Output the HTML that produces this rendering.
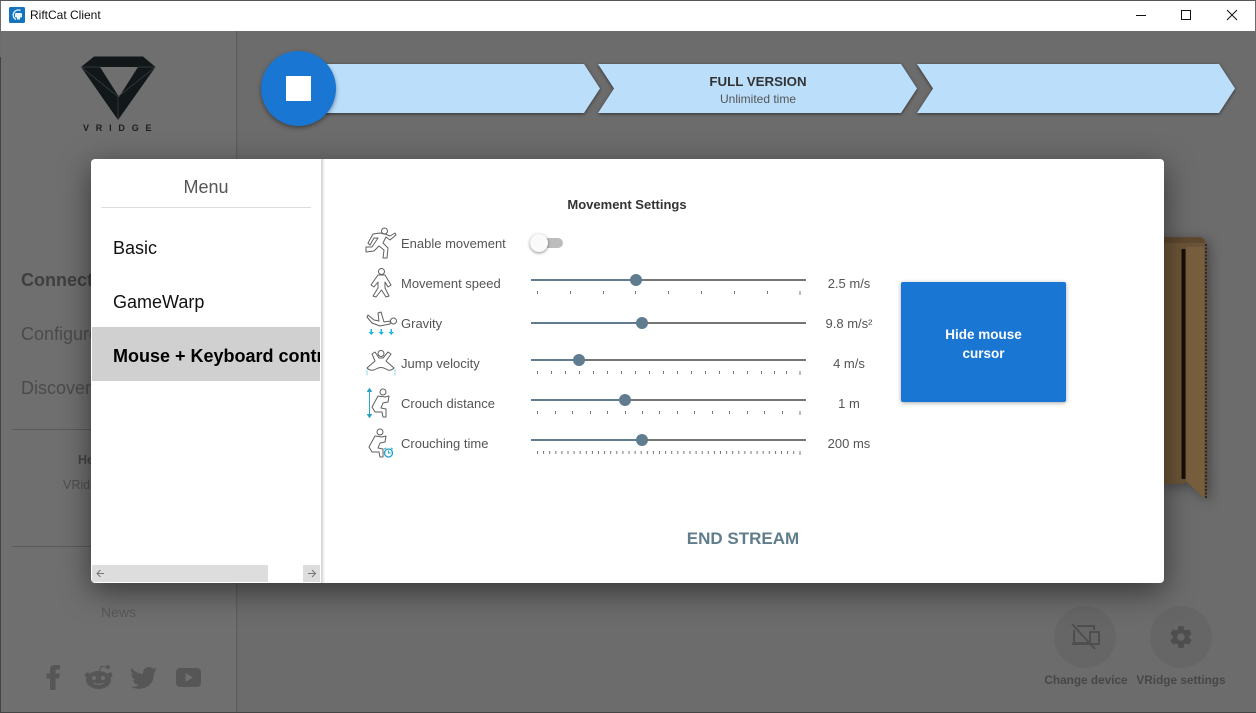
<!DOCTYPE html>
<html><head><meta charset="utf-8"><style>
html,body{margin:0;padding:0;width:1256px;height:713px;overflow:hidden;background:#6d6d6d;font-family:"Liberation Sans",sans-serif}
.t{position:absolute;white-space:nowrap;line-height:20px;height:20px}
.a{position:absolute}
.c{text-align:center}
.l{font-size:13px;color:#555;left:401px}
.v{font-size:13px;color:#555;left:809px;width:80px;text-align:center}
.m{font-size:18px;color:#111;left:113px}
.b{font-size:18px;color:#4b4b4b;left:21px}
</style></head><body>
<!-- background -->
<div class="a" style="left:0;top:0;width:1256px;height:713px;background:#6c6c6c"></div>
<div class="a" style="left:1px;top:31px;width:235px;height:681px;background:#6f6f6f"></div>
<div class="a" style="left:236px;top:31px;width:1px;height:681px;background:#5e5e5e"></div>
<div class="a" style="left:237px;top:31px;width:1px;height:681px;background:#676767"></div>
<div class="a" style="left:0;top:57px;width:1px;height:656px;background:#444"></div>
<div class="a" style="left:0;top:712px;width:1256px;height:1px;background:#444"></div>
<div class="a" style="left:0;top:0;width:1256px;height:1px;background:#555"></div>
<!-- title bar -->
<div class="a" style="left:1px;top:1px;width:1254px;height:30px;background:#fff"></div>
<svg class="a" style="left:9px;top:7px" width="16" height="16" viewBox="0 0 16 16"><rect width="16" height="16" rx="1.5" fill="#1474bd"/><path d="M11.5 3.5A5 5 0 1 0 7 12.5" fill="none" stroke="#d8eefa" stroke-width="1.4"/><rect x="6" y="6" width="7" height="4.5" rx="1" fill="#e8f5fc"/><rect x="8" y="10.5" width="3" height="2" fill="#e8f5fc"/></svg>
<div class="t" style="left:30px;top:5px;font-size:12px;color:#111">RiftCat Client</div>
<svg class="a" style="left:1130px;top:5px" width="120" height="20" viewBox="0 0 120 20" fill="none" stroke="#111" stroke-width="1"><path d="M6 10.5H16"/><rect x="51.5" y="5.5" width="9" height="9"/><path d="M97 5L107 15M107 5L97 15"/></svg>
<!-- logo -->
<svg class="a" style="left:78px;top:52px" width="82" height="70" viewBox="78 52 82 70">
<path d="M94 56.500H143L155.500 67L118 120L81 67Z" fill="#12171a"/>
<path d="M100 67H138L119 97Z" fill="#6f6f6f"/>
<path d="M81 67H100M138 67H155.500M81 67L118 96.500L155.500 67M118 96.500V120" fill="none" stroke="#3c4245" stroke-width=".7"/>
</svg>
<div class="t" style="left:83px;top:118px;width:82px;font-size:9px;font-weight:bold;letter-spacing:6.800px;color:#1a1e20">VRIDGE</div>
<!-- left nav behind -->
<div class="t b" style="top:270px;font-weight:bold;color:#3e3e3e">Connect</div>
<div class="t b" style="top:324px">Configure</div>
<div class="t b" style="top:378px">Discover</div>
<div class="a" style="left:12px;top:429px;width:224px;height:1px;background:#5a5a5a"></div>
<div class="a" style="left:12px;top:546px;width:224px;height:1px;background:#5a5a5a"></div>
<div class="t" style="left:78px;top:450px;font-size:12.500px;font-weight:bold;color:#444">Help</div>
<div class="t" style="left:63px;top:475px;font-size:12.500px;color:#4f4f4f">VRidge</div>
<div class="t" style="left:101px;top:602px;font-size:14px;color:#595959">News</div>
<svg class="a" style="left:40px;top:660px" width="170" height="34" viewBox="40 660 170 34" fill="#565656">
<path d="M50 690V678.500H46.500V673.500H50V669.500Q50 665 55 665H60V669.500H57Q55.500 669.500 55.500 671V673.500H60L59 678.500H55.500V690Z"/>
<ellipse cx="98.500" cy="680" rx="12.500" ry="9"/><circle cx="87.500" cy="675" r="2.500"/><circle cx="110" cy="675" r="2.500"/><circle cx="108" cy="667" r="2"/><path d="M99 672L101 666.500L108 667" fill="none" stroke="#565656"/>
<circle cx="94" cy="678" r="2" fill="#6f6f6f"/><circle cx="103" cy="678" r="2" fill="#6f6f6f"/><path d="M93.500 683Q98.500 686 103.500 683" fill="none" stroke="#6f6f6f" stroke-width="1.200"/>
<path d="M131 668Q137 674 143 674Q143 667 149 667Q152 667 153 669L156 667.500L155 671L156 670.500Q155 672 154 673Q154 685 144 688Q137 690 131 687Q136 687 139 685Q134 684 133 680H135.500Q131.500 678 131.500 674L134 675Q130 672 131 668Z"/>
<rect x="176" y="668" width="25" height="19" rx="4"/><path d="M185.500 673V682L193 677.500Z" fill="#6f6f6f"/>
</svg>
<!-- chevrons -->
<svg class="a" style="left:300px;top:60px" width="945" height="62" viewBox="300 60 945 62">
<g fill="#bbdefb" style="filter:drop-shadow(0 1.500px 1.500px rgba(0,0,0,.55))"><path d="M300 64H584L600 88.500L584 113H300Z"/><path d="M598 64H901L917 88.500L901 113H598L614 88.500Z"/><path d="M917 64H1219L1235 88.500L1219 113H917L933 88.500Z"/></g>
</svg>
<div class="t c" style="left:598px;top:71px;width:320px;font-size:13.300px;font-weight:bold;color:#333;padding-top:0.500px">FULL VERSION</div>
<div class="t c" style="left:598px;top:89px;width:320px;font-size:12px;color:#555">Unlimited time</div>
<div class="a" style="left:261px;top:51px;width:75px;height:75px;border-radius:50%;background:#1976d2;box-shadow:0 2px 5px rgba(0,0,0,.4)"></div>
<div class="a" style="left:286px;top:76px;width:25px;height:25px;background:#fff"></div>
<!-- cardboard -->
<svg class="a" style="left:1160px;top:230px;filter:drop-shadow(3px 3px 6px rgba(0,0,0,.35))" width="60" height="280" viewBox="1160 230 60 280">
<path d="M1160 238L1200 237Q1206 238 1206 244L1207 498L1186 482L1183 484H1160Z" fill="#6b5437"/>
<path d="M1160 237H1200Q1205 238 1205 243H1160Z" fill="#5e4930"/>
<path d="M1160 244H1183V484H1160Z" fill="#6d5638"/>
<path d="M1186 247H1204V498L1186 481Z" fill="#775f3e"/>
<path d="M1183.500 249V479" stroke="#170e07" stroke-width="4"/>
<path d="M1206 244V498" stroke="#33261a" stroke-width="2" stroke-dasharray="2 1.500"/>
</svg>
<!-- bottom right -->
<div class="a" style="left:1054px;top:606px;width:62px;height:62px;border-radius:50%;background:#666"></div>
<div class="a" style="left:1150px;top:606px;width:62px;height:62px;border-radius:50%;background:#666"></div>
<svg class="a" style="left:1070px;top:622px" width="32" height="30" viewBox="0 0 32 30" fill="none" stroke="#4e4e4e" stroke-width="2"><path d="M2 2L25 27M7 4H24V8M4 8V21H18M2 22H19M19 10H29V22H20V10"/></svg>
<svg class="a" style="left:1168px;top:624px" width="26" height="26" viewBox="0 0 24 24"><path fill="#4e4e4e" d="M19.430 12.980c.04-.32.07-.64.07-.98s-.03-.66-.07-.98l2.110-1.650c.19-.15.24-.42.12-.64l-2-3.460c-.12-.22-.39-.3-.61-.22l-2.490 1c-.52-.4-1.080-.73-1.690-.98l-.38-2.650C14.460 2.180 14.250 2 14 2h-4c-.25 0-.46.18-.49.420l-.38 2.650c-.61.25-1.170.59-1.690.98l-2.490-1c-.23-.09-.49 0-.61.220l-2 3.460c-.13.220-.07.490.12.640l2.110 1.650c-.04.32-.07.650-.07.980s.03.660.07.980l-2.110 1.650c-.19.150-.24.420-.12.640l2 3.460c.12.220.39.300.61.220l2.490-1c.52.400 1.080.730 1.690.980l.38 2.650c.03.240.24.420.49.420h4c.25 0 .46-.18.49-.42l.38-2.650c.61-.25 1.170-.59 1.690-.98l2.490 1c.23.090.49 0 .61-.22l2-3.460c.12-.22.07-.49-.12-.64l-2.110-1.650zM12 15.500c-1.930 0-3.500-1.570-3.500-3.500s1.570-3.500 3.500-3.500 3.500 1.570 3.500 3.500-1.570 3.500-3.500 3.500z"/></svg>
<div class="t c" style="left:1030px;top:670px;width:112px;font-size:11.800px;font-weight:bold;color:#474747">Change device</div>
<div class="t c" style="left:1125px;top:670px;width:112px;font-size:11.800px;font-weight:bold;color:#474747">VRidge settings</div>
<!-- dialog -->
<div class="a" style="left:91px;top:159px;width:1073px;height:424px;background:#fff;border-radius:4px;box-shadow:0 8px 30px rgba(0,0,0,.5)"></div>
<div class="a" style="left:321px;top:159px;width:4px;height:424px;background:linear-gradient(90deg,#d2d2d2,#e2e2e2 40%,#fff)"></div>
<div class="t c" style="left:101px;top:177px;width:210px;font-size:18px;color:#555">Menu</div>
<div class="a" style="left:101px;top:207px;width:210px;height:1px;background:#ddd"></div>
<div class="t m" style="top:238px">Basic</div>
<div class="t m" style="top:292px">GameWarp</div>
<div class="a" style="left:92px;top:327px;width:228px;height:54px;background:#d0d0d0;overflow:hidden"><div class="t" style="left:21px;top:19px;font-size:18px;font-weight:bold;color:#000">Mouse + Keyboard controls</div></div>
<div class="a" style="left:92px;top:565px;width:176px;height:17px;background:#ddd"></div>
<div class="a" style="left:303px;top:565px;width:17px;height:17px;background:#ddd"></div>
<svg class="a" style="left:92px;top:565px" width="228" height="17" viewBox="92 565 228 17" fill="none" stroke="#777" stroke-width="1"><path d="M104 573.500H97M100.500 570L97 573.500L100.500 577M308 573.500H315.500M312 570L315.500 573.500L312 577"/></svg>
<!-- settings -->
<div class="t c" style="left:527px;top:195px;width:200px;font-size:13px;font-weight:bold;color:#333">Movement Settings</div>
<div class="t l" style="top:234px">Enable movement</div>
<div class="t l" style="top:274px">Movement speed</div>
<div class="t l" style="top:314px">Gravity</div>
<div class="t l" style="top:354px">Jump velocity</div>
<div class="t l" style="top:394px">Crouch distance</div>
<div class="t l" style="top:434px">Crouching time</div>
<div class="t v" style="top:274px">2.5 m/s</div>
<div class="t v" style="top:314px">9.8 m/s²</div>
<div class="t v" style="top:354px">4 m/s</div>
<div class="t v" style="top:394px">1 m</div>
<div class="t v" style="top:434px">200 ms</div>
<!-- toggle -->
<div class="a" style="left:532px;top:238px;width:31px;height:10px;border-radius:5px;background:#bdbdbd"></div>
<div class="a" style="left:530px;top:234px;width:18px;height:18px;border-radius:50%;background:#fafafa;box-shadow:0 1px 3px rgba(0,0,0,.45)"></div>
<!-- sliders -->
<svg class="a" style="left:525px;top:270px" width="290" height="190" viewBox="525 270 290 190" fill="none">
<g stroke="#757575" stroke-width="2"><path d="M636 280H806M642 323H806M579 360H806M625 400H806M642 440H806"/></g>
<g stroke="#5f7d8e" stroke-width="2"><path d="M531 280H636M531 323H642M531 360H579M531 400H625M531 440H642"/></g>
<g fill="#5f7d8e"><circle cx="636" cy="280" r="6"/><circle cx="642" cy="323" r="6"/><circle cx="579" cy="360" r="6"/><circle cx="625" cy="400" r="6"/><circle cx="642" cy="440" r="6"/></g>
<g stroke="#777" stroke-width="1">
<path d="M537.500 291v3M570.500 291v3M603.500 291v3M635.500 291v3M668.500 291v3M701.500 291v3M734.500 291v3M767.500 291v3"/>
<path d="M537.500 371v3M551.500 371v3M565.500 371v3M579.500 371v3M593.500 371v3M607.500 371v3M621.500 371v3M635.500 371v3M649.500 371v3M663.500 371v3M677.500 371v3M691.500 371v3M705.500 371v3M719.500 371v3M733.500 371v3M747.500 371v3M761.500 371v3M774.500 371v3M786.500 371v3"/>
<path d="M537.500 411v3M555.500 411v3M572.500 411v3M590.500 411v3M607.500 411v3M625.500 411v3M642.500 411v3M659.500 411v3M677.500 411v3M694.500 411v3M712.500 411v3M729.500 411v3M747.500 411v3M764.500 411v3M782.500 411v3"/>
<path d="M537 452.500H798" stroke-width="3" stroke-dasharray="1 5.100"/>
</g>
<g stroke="#b3bcc2" stroke-width="2"><path d="M800 291v4M800 371v4M800 411v4M800 451v4"/></g>
</svg>
<!-- icons -->
<svg class="a" style="left:362px;top:226px" width="38" height="236" viewBox="362 226 38 236" fill="none" stroke="#5f5f5f" stroke-width="1" stroke-linejoin="round" stroke-linecap="round">
<!-- run -->
<circle cx="384.500" cy="231" r="3"/><path d="M380 233L373 234L368 243L370 245L374 238L378 238L372 247L366 247L366 252L374 251L379 246L384 250L383 258L387 258L388 248L383 243L386 237L390 240L396 235L395 233L390 236L385 234Z"/>
<!-- walk -->
<circle cx="381.500" cy="271.500" r="3"/><path d="M378 275H385L391 285L388 287L385 282L385 288L389 296L386 297L381.500 290L376 297L373 296L378 288L378 282L374 287L371 285Z"/>
<!-- gravity -->
<circle cx="393.500" cy="321" r="3"/><path d="M390.500 321L384 322L381 312L378 313L379 321L374 320L368 315L367 317L372 323L380 326L390 324Z"/>
<g fill="#1fb5dc" stroke="none"><path d="M370.500 329h1.500v3h2l-2.700 3l-2.800-3h2zM380.500 329h1.500v3h2l-2.700 3l-2.800-3h2zM390.500 329h1.500v3h2l-2.700 3l-2.800-3h2z"/></g>
<!-- jump -->
<circle cx="381" cy="353.500" r="3"/><path d="M372 354L375 352L379 358H383L388 352L391 354L386 361L394 368Q390 372 386 369Q381 366 376 369Q371 372 367 368L375 361Z"/>
<path d="M367 370V375M395 370V375" stroke="#8fd6ea"/>
<!-- crouch -->
<circle cx="383" cy="392" r="3"/><path d="M378 396L385 397L389 396L388 402L383 403L381 408L386 409L386 417L383 417L382 412L375 412L372 407Z"/>
<g stroke="#2aa3c4" stroke-width="1"><path d="M369.500 390V416"/></g><path d="M367.500 391.500L369.500 388.500L371.500 391.500ZM367.500 414.500L369.500 417.500L371.500 414.500Z" fill="#2aa3c4" stroke="#2aa3c4"/>
<!-- crouching time -->
<circle cx="380" cy="432" r="3"/><path d="M375 436L382 437L386 436L385 442L380 443L378 448L383 449L383 457L380 457L379 452L372 452L369 447Z"/>
<circle cx="388.500" cy="453" r="4" stroke="#1fa0c4" stroke-width="1.300"/><path d="M388.500 451V453H390.500M384.500 449L386 448M392.500 449L391 448" stroke="#1fa0c4"/>
</svg>
<!-- button -->
<div class="a" style="left:901px;top:282px;width:165px;height:120px;background:#1976d2;border-radius:2px;box-shadow:0 1px 4px rgba(0,0,0,.35)"></div>
<div class="t c" style="left:901px;top:325px;width:165px;font-size:13.500px;font-weight:bold;color:#fff">Hide mouse</div>
<div class="t c" style="left:901px;top:344px;width:165px;font-size:13.500px;font-weight:bold;color:#fff">cursor</div>
<div class="t c" style="left:643px;top:529px;width:200px;font-size:17px;font-weight:bold;color:#607d8b">END STREAM</div>
</body></html>
